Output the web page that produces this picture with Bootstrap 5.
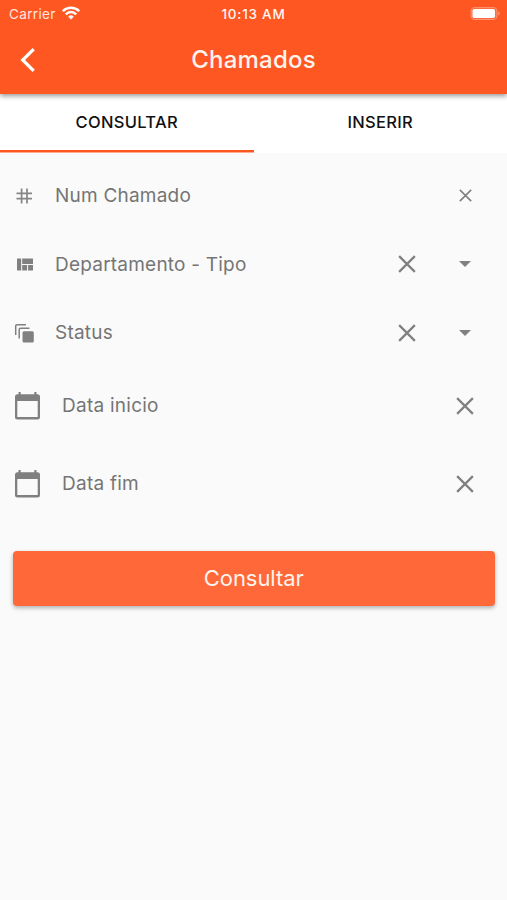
<!DOCTYPE html>
<html lang="pt-BR">
<head>
<meta charset="utf-8">
<meta name="viewport" content="width=device-width, initial-scale=1">
<title>Chamados</title>
<link href="https://cdn.jsdelivr.net/npm/bootstrap@5.3.0/dist/css/bootstrap.min.css" rel="stylesheet">
<style>
body{font-family:Inter,"Liberation Sans",sans-serif;background:#fafafa;color:#757575;min-height:900px;overflow:hidden}
svg{display:block;flex:none}
.app-head{background:#ff5722;height:94px;box-shadow:0 2px 5px rgba(0,0,0,.42);z-index:2}
.status{height:28px;padding:0 7px 0 9px;font-size:13px;line-height:28px}
.status .side{flex:1 1 0}
.carrier{font-size:13.5px;letter-spacing:.35px;opacity:.85}
.wifi{margin-left:6px;margin-bottom:2px}
.clock{font-weight:500;font-size:13.5px;letter-spacing:.75px;margin-right:2px;opacity:.95}
.title-bar{height:64px;padding:0 20px}
.title-bar h1{font-size:24px;font-weight:500;letter-spacing:.22px;line-height:1;color:#fff3ee}
.tab-strip{height:59px;background:#fff}
.tab-strip .nav-link{height:59px;padding:0;color:#111;font-size:16.5px;font-weight:500;letter-spacing:.32px;line-height:56px;border-radius:0;position:relative}
.tab-strip .nav-link.active{background:linear-gradient(#ff5722,#ff5722) 0 56px/100% 2.5px no-repeat}
.fields{padding:9px 26px 0 14px}
.field{height:68.5px;font-size:19px;letter-spacing:.22px}
.date-field{height:78px;font-size:19px;letter-spacing:.25px}
.lead-icon{width:41px}
.date-field .lead-icon{width:48px}
.date-field svg{margin-bottom:1.5px}
.icon-cell{width:32px}
.fields button{color:#808080}
.field button svg{margin-bottom:1px}
.gap-cell{margin-right:26px}
.submit{margin:27px 12.5px 0 13px;height:55px;background:#ff6838;color:#fff3ee;font-size:22px;letter-spacing:-.05px;border-radius:4px;box-shadow:0 2px 4px rgba(0,0,0,.3)}
</style>
<script src="https://cdn.jsdelivr.net/npm/bootstrap@5.3.0/dist/js/bootstrap.bundle.min.js"></script>
</head>
<body>
<svg class="d-none">
<symbol id="x" viewBox="0 0 16 16"><path d="M1 1l14 14M15 1L1 15" stroke="currentColor" stroke-width="2" fill="none"/></symbol>
<symbol id="cal" viewBox="0 0 26 28"><path fill="currentColor" fill-rule="evenodd" d="M4.500 0h2.200v2.300h13.600V0h2.200v2.300H23.500a2.500 2.500 0 0 1 2.500 2.500v20.200a2.500 2.500 0 0 1-2.500 2.500H3.500A2.500 2.500 0 0 1 1 25V4.800a2.500 2.500 0 0 1 2.500-2.500h1zM3.300 9v16.100h20.400V9z"/></symbol>
</svg>
<header class="app-head position-relative text-white">
  <div class="status d-flex align-items-center">
    <div class="side d-flex align-items-center"><span class="carrier">Carrier</span>
      <svg class="wifi" width="18" height="14" viewBox="0 0 18 14" fill="none" stroke="#fff" stroke-width="2.500"><path d="M.8 5.200a11.500 11.500 0 0 1 16.400 0M3.800 8.300a7.300 7.300 0 0 1 10.400 0"/><path d="M6.200 10.700a4 4 0 0 1 5.600 0L9 13.600z" fill="#fff" stroke="none"/></svg>
    </div>
    <span class="clock">10:13 AM</span>
    <div class="side d-flex justify-content-end"><svg width="30" height="14" viewBox="0 0 30 14"><rect x="1" y=".5" width="26" height="12" rx="3.500" fill="#fff" fill-opacity=".12" stroke="#fff" stroke-opacity=".3"/><rect x="2.500" y="2" width="22.500" height="9" rx="1.800" fill="#fff"/><path d="M28.300 4.600v4q1.400-.7 1.400-2t-1.400-2z" fill="#fff" fill-opacity=".45"/></svg></div>
  </div>
  <div class="title-bar d-flex align-items-center">
    <svg width="16" height="24" viewBox="0 0 16 24" fill="none" stroke="#fff" stroke-width="3.200"><path d="M13.700 1.200L2.700 12l11 10.800"/></svg>
    <h1 class="flex-fill text-center m-0 pe-3">Chamados</h1>
  </div>
</header>
<ul class="nav nav-fill tab-strip flex-nowrap">
  <li class="nav-item w-50"><a class="nav-link active" href="#">CONSULTAR</a></li>
  <li class="nav-item w-50"><a class="nav-link" href="#">INSERIR</a></li>
</ul>
<main>
  <div class="fields">
    <div class="field d-flex align-items-center">
      <span class="lead-icon"><svg width="21" height="20" viewBox="0 0 21 20" fill="none" stroke="#858585" stroke-width="1.700"><path d="M7.600 2.500v15M13 2.500v15M2.500 7.300h15.500M2.500 12.700h15.500"/></svg></span>
      <span class="flex-fill">Num Chamado</span>
      <button class="btn p-0 border-0 icon-cell d-flex justify-content-center"><svg width="13" height="13"><use href="#x"/></svg></button>
    </div>
    <div class="field d-flex align-items-center">
      <span class="lead-icon"><svg width="21" height="20" viewBox="0 0 21 20" fill="#808080"><path d="M3 3.500h4.200v12H3zM8.200 3.500H19V9H8.200zM8.200 10h4.900v5.500H8.200zM14.100 10H19v5.500h-4.900z"/></svg></span>
      <span class="flex-fill">Departamento - Tipo</span>
      <button class="btn p-0 border-0 icon-cell gap-cell d-flex justify-content-center"><svg width="18" height="18"><use href="#x"/></svg></button>
      <button class="btn p-0 border-0 icon-cell d-flex justify-content-center"><svg width="12" height="6" viewBox="0 0 12 6"><path fill="currentColor" d="M0 0h12L6 6z"/></svg></button>
    </div>
    <div class="field d-flex align-items-center">
      <span class="lead-icon"><svg width="21" height="20" viewBox="0 0 21 20"><path d="M1.700 12V3a1.300 1.300 0 0 1 1.300-1.300h9M5.200 15.500v-9a1.300 1.300 0 0 1 1.300-1.300h9" fill="none" stroke="#808080" stroke-width="1.500"/><rect x="8.500" y="8.300" width="11.300" height="11.300" rx="1.500" fill="#808080"/></svg></span>
      <span class="flex-fill">Status</span>
      <button class="btn p-0 border-0 icon-cell gap-cell d-flex justify-content-center"><svg width="18" height="18"><use href="#x"/></svg></button>
      <button class="btn p-0 border-0 icon-cell d-flex justify-content-center"><svg width="12" height="6" viewBox="0 0 12 6"><path fill="currentColor" d="M0 0h12L6 6z"/></svg></button>
    </div>
    <div class="date-field d-flex align-items-center">
      <span class="lead-icon"><svg width="26" height="28" color="#808080"><use href="#cal"/></svg></span>
      <span class="flex-fill">Data inicio</span>
      <button class="btn p-0 border-0 icon-cell d-flex justify-content-center"><svg width="18" height="18"><use href="#x"/></svg></button>
    </div>
    <div class="date-field d-flex align-items-center">
      <span class="lead-icon"><svg width="26" height="28" color="#808080"><use href="#cal"/></svg></span>
      <span class="flex-fill">Data fim</span>
      <button class="btn p-0 border-0 icon-cell d-flex justify-content-center"><svg width="18" height="18"><use href="#x"/></svg></button>
    </div>
  </div>
  <div class="d-grid"><button class="btn submit p-0 border-0">Consultar</button></div>
</main>
</body>
</html>
